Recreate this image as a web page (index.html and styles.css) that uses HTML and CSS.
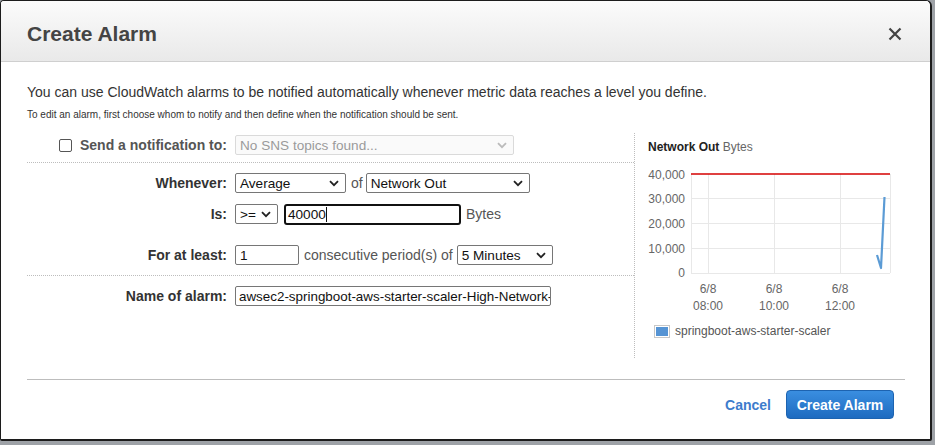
FILE: index.html
```html
<!DOCTYPE html>
<html>
<head>
<meta charset="utf-8">
<link rel="stylesheet" href="styles.css">
</head>
<body>
<div class="modal">
  <div class="modal-header">
    <h1 class="title">Create Alarm</h1>
    <svg class="close" width="14" height="14" viewBox="0 0 14 14"><path d="M1.5 1.5 L12.5 12.5 M12.5 1.5 L1.5 12.5" stroke="#444" stroke-width="2.2" fill="none"/></svg>
  </div>
  <div class="modal-body">
    <p class="intro">You can use CloudWatch alarms to be notified automatically whenever metric data reaches a level you define.</p>
    <p class="hint">To edit an alarm, first choose whom to notify and then define when the notification should be sent.</p>
    <div class="main">
      <div class="form">
        <div class="section s1">
          <div class="row">
            <label class="lbl muted"><span class="checkbox"></span>Send a notification to:</label>
            <div class="ctrls">
              <div class="select disabled w-sns">No SNS topics found...<svg class="chev" width="10" height="7" viewBox="0 0 10 7"><path d="M1 1.2 L5 5.2 L9 1.2" stroke="#bbb" stroke-width="1.8" fill="none"/></svg></div>
            </div>
          </div>
        </div>
        <div class="section s2">
          <div class="row">
            <label class="lbl">Whenever:</label>
            <div class="ctrls">
              <div class="select w-avg">Average<svg class="chev" width="10" height="7" viewBox="0 0 10 7"><path d="M1 1.2 L5 5.2 L9 1.2" stroke="#222" stroke-width="1.8" fill="none"/></svg></div>
              <span class="txt of">of</span>
              <div class="select w-metric">Network Out<svg class="chev" width="10" height="7" viewBox="0 0 10 7"><path d="M1 1.2 L5 5.2 L9 1.2" stroke="#222" stroke-width="1.8" fill="none"/></svg></div>
            </div>
          </div>
          <div class="row">
            <label class="lbl">Is:</label>
            <div class="ctrls">
              <div class="select w-op">&gt;=<svg class="chev" width="10" height="7" viewBox="0 0 10 7"><path d="M1 1.2 L5 5.2 L9 1.2" stroke="#222" stroke-width="1.8" fill="none"/></svg></div>
              <div class="input focused w-threshold">40000<span class="caret"></span></div>
              <span class="txt bytes">Bytes</span>
            </div>
          </div>
          <div class="row row-gap">
            <label class="lbl">For at least:</label>
            <div class="ctrls">
              <div class="input w-periods">1</div>
              <span class="txt cons">consecutive period(s) of</span>
              <div class="select w-period">5 Minutes<svg class="chev" width="10" height="7" viewBox="0 0 10 7"><path d="M1 1.2 L5 5.2 L9 1.2" stroke="#222" stroke-width="1.8" fill="none"/></svg></div>
            </div>
          </div>
        </div>
        <div class="section s3">
          <div class="row">
            <label class="lbl">Name of alarm:</label>
            <div class="ctrls">
              <div class="input w-name">awsec2-springboot-aws-starter-scaler-High-Network-</div>
            </div>
          </div>
        </div>
      </div>
      <div class="chart">
        <div class="chart-title"><b>Network Out</b> <span>Bytes</span></div>
        <svg class="plot" width="270" height="160" viewBox="0 0 270 160">
          <g stroke="#e8e8e8" stroke-width="1" fill="none">
            <line x1="56" y1="38.5" x2="255" y2="38.5"/>
            <line x1="56" y1="63.5" x2="255" y2="63.5"/>
            <line x1="56" y1="88.5" x2="255" y2="88.5"/>
            <line x1="56" y1="113.5" x2="255" y2="113.5"/>
            <line x1="73.5" y1="14" x2="73.5" y2="113"/>
            <line x1="139.5" y1="14" x2="139.5" y2="113"/>
            <line x1="205.5" y1="14" x2="205.5" y2="113"/>
            <line x1="255.5" y1="14" x2="255.5" y2="113"/>
            <line x1="56.5" y1="14" x2="56.5" y2="113"/>
          </g>
          <line x1="56" y1="14" x2="255" y2="14" stroke="#d40000" stroke-width="1.6"/>
          <polyline points="242,95 246,108 249.5,37" stroke="#5b9bd5" stroke-width="2.2" fill="none" stroke-linejoin="round"/>
          <g class="axis" text-anchor="end">
            <text x="50" y="18.5">40,000</text>
            <text x="50" y="43">30,000</text>
            <text x="50" y="68">20,000</text>
            <text x="50" y="92.5">10,000</text>
            <text x="50" y="117">0</text>
          </g>
          <g class="axis" text-anchor="middle">
            <text x="73" y="133">6/8</text>
            <text x="73" y="150">08:00</text>
            <text x="139" y="133">6/8</text>
            <text x="139" y="150">10:00</text>
            <text x="205" y="133">6/8</text>
            <text x="205" y="150">12:00</text>
          </g>
        </svg>
        <div class="legend"><span class="swatch"></span><span>springboot-aws-starter-scaler</span></div>
      </div>
    </div>
    <div class="footer">
      <a class="cancel">Cancel</a>
      <button class="primary">Create Alarm</button>
    </div>
  </div>
</div>
</body>
</html>
```
FILE: styles.css
```css
html, body {
  margin: 0;
  padding: 0;
}
body {
  background: #9ea2a7;
  width: 935px;
  height: 445px;
  overflow: hidden;
  font-family: "Liberation Sans", Arial, sans-serif;
  color: #333;
}
.modal {
  width: 929px;
  height: 438px;
  background: #fff;
  border-style: solid;
  border-color: #1c1c1c;
  border-width: 1px 2px 2px 1px;
  border-radius: 4px 6px 2px 2px;
  overflow: hidden;
}
.modal-header {
  box-sizing: border-box;
  height: 61px;
  border-bottom: 1px solid #cfcfcf;
  background: linear-gradient(#fbfbfb, #e9e9e9);
  display: flex;
  align-items: center;
  justify-content: space-between;
  padding: 6px 28px 0 26px;
}
.title {
  margin: 0;
  font-size: 21px;
  font-weight: bold;
  color: #444;
}
.close {
  display: block;
}
.modal-body {
  padding: 0 25px 0 26px;
}
.intro {
  margin: 22px 0 0;
  font-size: 14px;
  line-height: 16px;
  color: #333;
}
.hint {
  margin: 9px 0 0;
  font-size: 10px;
  line-height: 12px;
  color: #333;
}
.main {
  margin-top: 12px;
  display: flex;
  height: 225px;
}
.form {
  width: 608px;
  border-right: 1px dotted #bdbdbd;
}
.section {
  border-bottom: 1px dotted #bdbdbd;
}
.s1 { padding: 2px 0 7px; }
.s2 { padding: 10px 0 10px; display: flex; flex-direction: column; gap: 11px; }
.s2 .row-gap { margin-top: 10px; }
.s3 { padding: 10px 0 0; border-bottom: none; }
.row {
  display: grid;
  grid-template-columns: 200px 1fr;
  column-gap: 8px;
  align-items: center;
  height: 20px;
}
.lbl {
  text-align: right;
  font-weight: bold;
  font-size: 14px;
  color: #333;
  display: flex;
  justify-content: flex-end;
  align-items: center;
}
.lbl.muted { color: #555; }
.checkbox {
  width: 11px;
  height: 11px;
  border: 1px solid #555;
  border-radius: 2px;
  margin-right: 8px;
  background: #fff;
}
.ctrls {
  display: flex;
  align-items: center;
  height: 20px;
}
.select, .input {
  box-sizing: border-box;
  height: 20px;
  border: 1px solid #767676;
  border-radius: 2px;
  background: #fff;
  font-size: 13.6px;
  color: #111;
  display: flex;
  align-items: center;
  padding-left: 4px;
  position: relative;
  white-space: nowrap;
  overflow: hidden;
}
.select .chev {
  position: absolute;
  right: 6px;
  top: 6px;
}
.select.disabled {
  background: #fafafa;
  border-color: #dadada;
  color: #9a9a9a;
}
.w-sns { width: 279px; }
.w-avg { width: 111px; }
.w-metric { width: 164px; }
.w-op { width: 43px; }
.w-threshold { width: 177px; margin-left: 6px; }
.w-periods { width: 64px; }
.w-period { width: 96px; }
.w-name { width: 316px; padding-left: 3px; font-size: 13.4px; }
.input.focused {
  border: 2px solid #111;
  border-radius: 3px;
  padding-left: 2px;
  height: 21px;
}
.caret {
  display: inline-block;
  width: 1px;
  height: 15px;
  background: #111;
}
.txt {
  font-size: 14px;
  color: #555;
}
.of { margin: 0 3px 0 5px; }
.bytes { margin-left: 5px; }
.cons { margin: 0 4px 0 5px; }
.chart {
  flex: 1;
}
.chart-title {
  margin: 7px 0 0 13px;
  font-size: 12px;
  line-height: 14px;
  color: #666;
}
.chart-title b { color: #222; }
.plot {
  display: block;
  margin-top: 6px;
}
.axis {
  font-family: "Liberation Sans", Arial, sans-serif;
  font-size: 12px;
  fill: #666;
}
.legend {
  margin: 4px 0 0 19px;
  display: flex;
  align-items: center;
  font-size: 12px;
  color: #555;
}
.swatch {
  box-sizing: border-box;
  width: 16px;
  height: 13px;
  border: 1px solid #c8c8c8;
  background: #5694d4;
  box-shadow: inset 0 0 0 1px #fff;
  margin-right: 5px;
}
.footer {
  margin-top: 21px;
  border-top: 1px solid #bdbdbd;
  display: flex;
  justify-content: flex-end;
  align-items: center;
  padding: 10px 11px 0 0;
  gap: 15px;
}
.cancel {
  font-size: 14px;
  font-weight: bold;
  color: #3d7ccc;
}
.primary {
  width: 108px;
  height: 29px;
  border: 1px solid #1d63b0;
  border-radius: 4px;
  background: linear-gradient(#3a8ee0, #1e6bc0);
  color: #fff;
  font-family: "Liberation Sans", Arial, sans-serif;
  font-weight: bold;
  font-size: 14px;
  padding: 0;
}
```
